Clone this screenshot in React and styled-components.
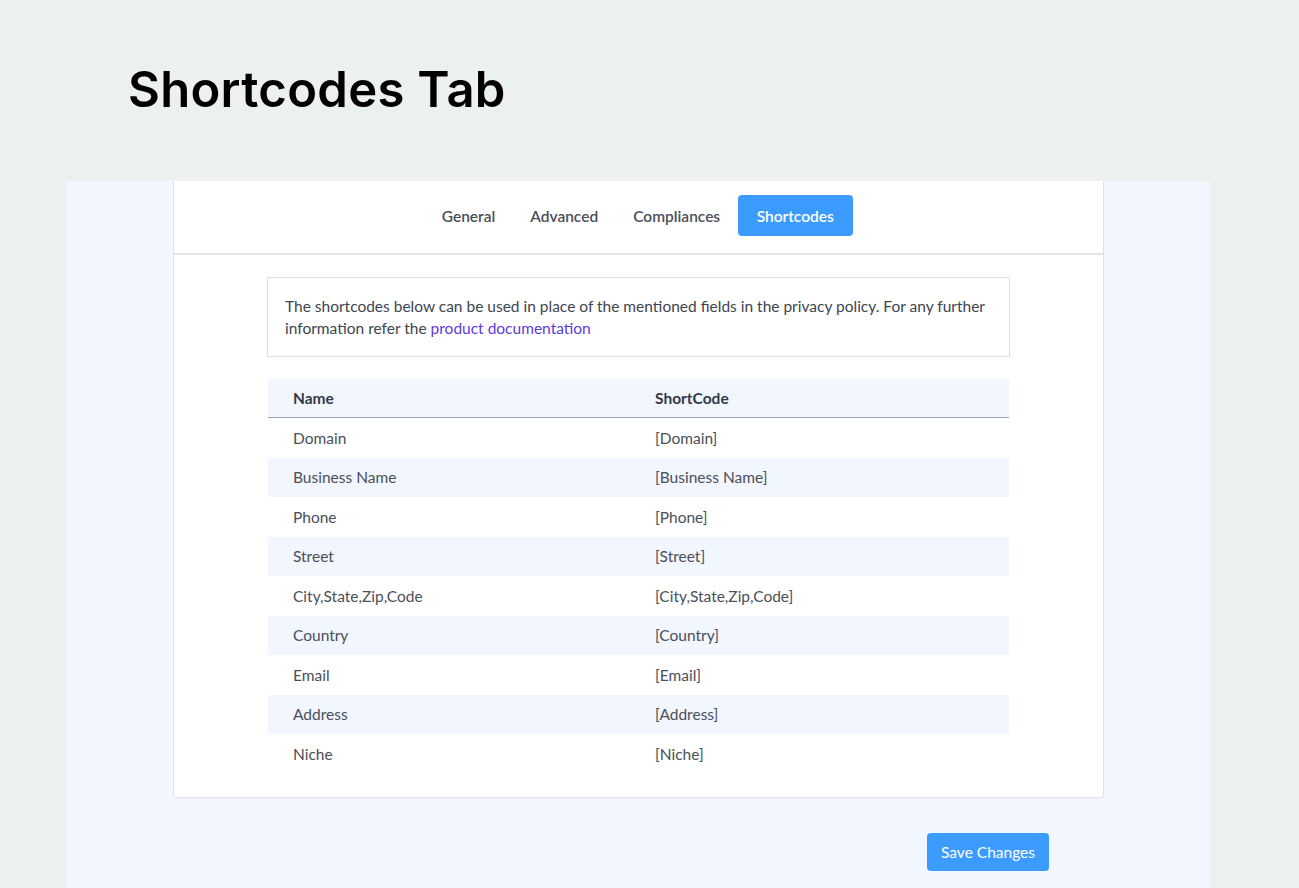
import React from "react";
import styled, { createGlobalStyle } from "styled-components";

const GlobalStyle = createGlobalStyle`
  html, body {
    margin: 0;
    padding: 0;
    background: #ecf1ef;
  }
  body {
    font-family: "Lato", "Open Sans", sans-serif;
  }
`;

const Page = styled.div`
  width: 1299px;
  height: 888px;
  overflow: hidden;
  background: #ecf1ef;
`;

const Title = styled.h1`
  margin: 0;
  padding: 60px 0 0 128px;
  height: 181px;
  box-sizing: border-box;
  font-family: "Inter", sans-serif;
  font-size: 49px;
  font-weight: 600;
  letter-spacing: 0.3px;
  color: #000;
  line-height: 60px;
`;

const Panel = styled.div`
  margin-left: 66px;
  width: 1144px;
  height: 707px;
  background: #f2f6fe;
  padding-left: 107px;
  box-sizing: border-box;
`;

const Card = styled.div`
  width: 931px;
  background: #fff;
  border: 1px solid #dfe2e8;
  border-top: none;
  border-radius: 0 0 4px 4px;
  box-sizing: border-box;
`;

const TabBar = styled.div`
  height: 72px;
  border-bottom: 2px solid #e2e4e9;
  display: flex;
  justify-content: center;
  align-items: center;
`;

const Tab = styled.div`
  height: 41px;
  padding: 0 ${(p) => (p.active ? "19px" : "17.5px")};
  display: flex;
  align-items: center;
  font-size: 15.5px;
  font-weight: 600;
  color: ${(p) => (p.active ? "#fff" : "#4a4f5a")};
  background: ${(p) => (p.active ? "#3b9bff" : "transparent")};
  border-radius: 4px;
  margin-bottom: 3px;
`;

const Body = styled.div`
  padding: 22px 93px 23px 93px;
`;

const Info = styled.p`
  margin: 0 0 22px 0;
  border: 1px solid #dcdfe3;
  padding: 17px;
  font-size: 15.5px;
  line-height: 22px;
  color: #40454f;
  height: 80px;
  box-sizing: border-box;
`;

const Link = styled.a`
  color: #5b3be0;
  text-decoration: none;
`;

const Table = styled.div`
  margin-left: 1px;
  width: 741px;
`;

const Row = styled.div`
  display: grid;
  grid-template-columns: 362px 1fr;
  height: ${(p) => (p.head ? "39px" : "39.5px")};
  align-items: center;
  padding-left: 25px;
  background: ${(p) => (p.shade ? "#f2f6fe" : "#fff")};
  border-bottom: ${(p) => (p.head ? "1px solid #9aa3b0" : "none")};
  font-size: 15.5px;
  line-height: 20px;
  box-sizing: border-box;
  font-weight: ${(p) => (p.head ? 700 : 400)};
  color: ${(p) => (p.head ? "#323a4a" : "#4a4f5a")};
`;

const Footer = styled.div`
  display: flex;
  justify-content: flex-end;
  padding: 35px 161px 0 0;
`;

const SaveButton = styled.button`
  height: 38px;
  width: 122px;
  border: none;
  border-radius: 4px;
  background: #3b9bff;
  color: #fff;
  font-family: "Lato", sans-serif;
  font-size: 15.5px;
  padding: 0;
`;

const rows = [
  ["Domain", "[Domain]"],
  ["Business Name", "[Business Name]"],
  ["Phone", "[Phone]"],
  ["Street", "[Street]"],
  ["City,State,Zip,Code", "[City,State,Zip,Code]"],
  ["Country", "[Country]"],
  ["Email", "[Email]"],
  ["Address", "[Address]"],
  ["Niche", "[Niche]"],
];

export default function App() {
  return (
    <Page>
      <GlobalStyle />
      <Title>Shortcodes Tab</Title>
      <Panel>
        <Card>
          <TabBar>
            <Tab>General</Tab>
            <Tab>Advanced</Tab>
            <Tab>Compliances</Tab>
            <Tab active>Shortcodes</Tab>
          </TabBar>
          <Body>
            <Info>
              The shortcodes below can be used in place of the mentioned fields in the privacy policy. For any further
              information refer the <Link href="#">product documentation</Link>
            </Info>
            <Table>
              <Row head shade>
                <span>Name</span>
                <span>ShortCode</span>
              </Row>
              {rows.map(([name, code], i) => (
                <Row key={name} shade={i % 2 === 1}>
                  <span>{name}</span>
                  <span>{code}</span>
                </Row>
              ))}
            </Table>
          </Body>
        </Card>
        <Footer>
          <SaveButton>Save Changes</SaveButton>
        </Footer>
      </Panel>
    </Page>
  );
}
